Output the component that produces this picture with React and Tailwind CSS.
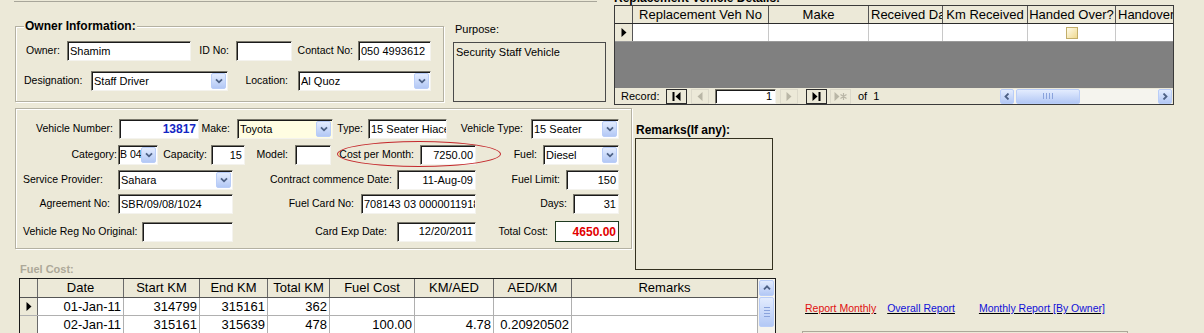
import React from 'react';

// Access XP style sunken control border
const sunken =
  'bg-white border border-t-[#7a786c] border-l-[#7a786c] border-r-[#f4f3ee] border-b-[#f4f3ee] shadow-[inset_1px_1px_0_#1a1a1a]';
const xpBtn = 'rounded-[2px] border border-[#b9cdf8] bg-linear-to-b from-[#e3ecfe] to-[#b3c8f5]';

function Chevron({ dir = 'down' }) {
  const d = {
    down: 'M1 1.3 L4 4.3 L7 1.3',
    up: 'M1 4.3 L4 1.3 L7 4.3',
    left: 'M4.5 0.5 L1.5 3.5 L4.5 6.5',
    right: 'M1.5 0.5 L4.5 3.5 L1.5 6.5',
  }[dir];
  const vertical = dir === 'down' || dir === 'up';
  return (
    <svg width={vertical ? 8 : 6} height={vertical ? 6 : 7} viewBox={vertical ? '0 0 8 6' : '0 0 6 7'}>
      <path d={d} fill="none" stroke="#4d6185" strokeWidth="1.8" />
    </svg>
  );
}

function DropBtn() {
  return (
    <span className={`ml-auto mr-[1px] flex h-[16px] w-[15px] shrink-0 items-center justify-center ${xpBtn}`}>
      <Chevron />
    </span>
  );
}

function Box({ w, children, right, className = '' }) {
  return (
    <div
      className={`${w} h-[20px] shrink-0 ${sunken} flex items-center overflow-hidden whitespace-nowrap px-[2px] text-[11px] ${
        right ? 'justify-end' : ''
      } ${className}`}
    >
      {children}
    </div>
  );
}

function Combo({ w, children, className = 'bg-white', text = 'text-[11px] pl-[2px]' }) {
  return (
    <div
      className={`${w} h-[20px] shrink-0 border border-t-[#7a786c] border-l-[#7a786c] border-r-[#f4f3ee] border-b-[#f4f3ee] shadow-[inset_1px_1px_0_#1a1a1a] ${className} flex items-center ${text}`}
    >
      <span className="flex-1 overflow-hidden whitespace-nowrap">{children}</span>
      <DropBtn />
    </div>
  );
}

function Label({ w, children, className = 'text-right' }) {
  return <span className={`${w} shrink-0 whitespace-nowrap text-[10.5px] ${className}`}>{children}</span>;
}

function Tri({ dir = 'right', fill = '#000' }) {
  return (
    <svg width="6" height="9" viewBox="0 0 6 9">
      <path d={dir === 'right' ? 'M0.5 0 L5.5 4.5 L0.5 9Z' : 'M5.5 0 L0.5 4.5 L5.5 9Z'} fill={fill} />
    </svg>
  );
}

function OwnerFrame() {
  return (
    <div className="relative ml-[15px] h-[76px] w-[429px] shrink-0 border border-[#b4b1a2] shadow-[inset_1px_1px_0_#fff,1px_1px_0_#fff]">
      <span className="absolute left-[8px] -top-[7px] bg-[#ece9d8] px-[1px] text-[12px] font-bold leading-[13px]">
        Owner Information:
      </span>
      <div className="mt-[14px] flex items-center">
        <Label w="w-[51px]" className="pl-[10px] text-left">Owner:</Label>
        <Box w="w-[124px]">Shamim</Box>
        <Label w="w-[45px]" className="pr-[7px] text-right">ID No:</Label>
        <Box w="w-[56px]" />
        <Label w="w-[66px]" className="pr-[5px] text-right">Contact No:</Label>
        <Box w="w-[73px]">050 4993612</Box>
      </div>
      <div className="mt-[10px] flex items-center">
        <Label w="w-[75px]" className="pl-[8px] text-left">Designation:</Label>
        <Combo w="w-[137px]">Staff Driver</Combo>
        <Label w="w-[70px]" className="pr-[10px] text-right">Location:</Label>
        <Combo w="w-[133px]">Al Quoz</Combo>
      </div>
    </div>
  );
}

function NavBtn({ w = 'w-[18px]', on, children, className = '' }) {
  return (
    <span
      className={`${w} flex h-[15px] shrink-0 items-center justify-center border ${
        on ? 'border-[#2b2b2b]' : 'border-[#dcd9ca]'
      } ${className}`}
    >
      {children}
    </span>
  );
}

function ReplacementGrid() {
  const cols = [
    ['w-[136px]', 'Replacement Veh No', 'justify-center'],
    ['w-[100px]', 'Make', 'justify-center'],
    ['w-[74px]', 'Received Da', 'justify-start pl-[2px]'],
    ['w-[85px]', 'Km Received', 'justify-center'],
    ['w-[88px]', 'Handed Over?', 'justify-center'],
    ['w-[60px]', 'Handover', 'justify-start pl-[2px]'],
  ];
  return (
    <div className="ml-[8px] w-[560px] shrink-0">
      <div className="-mt-[8px] h-[13px] whitespace-nowrap text-[12px] font-bold leading-[13px]">
        Replacement Vehicle Details:
      </div>
      <div className="flex flex-col overflow-hidden border border-[#3a3a3a] text-[13px]">
        <div className="flex h-[18px] border-b border-[#2b2b2b] bg-[#ece9d8]">
          <span className="w-[18px] shrink-0 border-r border-[#555]" />
          {cols.map(([w, t, a]) => (
            <span key={t} className={`${w} flex shrink-0 items-center overflow-hidden whitespace-nowrap border-r border-[#555] ${a}`}>
              {t}
            </span>
          ))}
        </div>
        <div className="flex h-[18px] border-b border-[#9a9a9a] bg-white">
          <span className="flex w-[18px] shrink-0 items-center justify-center border-r border-[#555] bg-[#ece9d8]">
            <Tri />
          </span>
          {cols.map(([w, t], i) => (
            <span key={t} className={`${w} flex shrink-0 items-center justify-center border-r border-[#c8c8c8]`}>
              {i === 4 && (
                <span className="h-[12px] w-[12px] border border-[#c2ae6a] bg-linear-to-br from-[#fffbe8] to-[#efd98f]" />
              )}
            </span>
          ))}
        </div>
        <div className="h-[46px] bg-[#808080]" />
        <div className="flex h-[16px] items-center bg-[#ece9d8] text-[11px]">
          <span className="w-[51px] shrink-0 pl-[6px]">Record:</span>
          <NavBtn w="w-[21px]" on>
            <svg width="9" height="9" viewBox="0 0 9 9">
              <rect x="0.5" y="0" width="2" height="9" />
              <path d="M8.5 0 L3.5 4.5 L8.5 9Z" />
            </svg>
          </NavBtn>
          <NavBtn className="ml-[4px]">
            <Tri dir="left" fill="#b9b6a6" />
          </NavBtn>
          <span className={`ml-[6px] flex h-[15px] w-[61px] items-center justify-end pr-[3px] ${sunken}`}>1</span>
          <NavBtn className="ml-[4px]">
            <Tri fill="#b9b6a6" />
          </NavBtn>
          <NavBtn w="w-[21px]" on className="ml-[8px]">
            <svg width="9" height="9" viewBox="0 0 9 9">
              <path d="M0.5 0 L5.5 4.5 L0.5 9Z" />
              <rect x="6.5" y="0" width="2" height="9" />
            </svg>
          </NavBtn>
          <NavBtn w="w-[21px]" className="ml-[3px]">
            <svg width="13" height="9" viewBox="0 0 13 9">
              <path d="M0.5 0 L5.5 4.5 L0.5 9Z" fill="#b9b6a6" />
              <path d="M9.5 1 V8 M6.5 2.5 L12.5 6.5 M12.5 2.5 L6.5 6.5" stroke="#b9b6a6" strokeWidth="1.2" />
            </svg>
          </NavBtn>
          <span className="ml-[7px]">of&nbsp;&nbsp;1</span>
          <div className="ml-auto mr-[1px] flex h-[15px] w-[172px] bg-[#f5f4ee]">
            <span className={`flex w-[14px] items-center justify-center ${xpBtn}`}>
              <Chevron dir="left" />
            </span>
            <span className={`ml-[2px] flex w-[64px] items-center justify-center gap-[2px] ${xpBtn}`}>
              <span className="h-[6px] w-px bg-[#8aa3dc]" />
              <span className="h-[6px] w-px bg-[#8aa3dc]" />
              <span className="h-[6px] w-px bg-[#8aa3dc]" />
              <span className="h-[6px] w-px bg-[#8aa3dc]" />
            </span>
            <span className="flex-1" />
            <span className={`flex w-[14px] items-center justify-center ${xpBtn}`}>
              <Chevron dir="right" />
            </span>
          </div>
        </div>
      </div>
    </div>
  );
}

function VehicleFrame() {
  return (
    <div className="relative ml-[15px] h-[141px] w-[617px] shrink-0 border border-[#b4b1a2] shadow-[inset_1px_1px_0_#fff,1px_1px_0_#fff]">
      <div className="mt-[10px] flex items-center">
        <Label w="w-[103px]" className="pr-[6px] text-right">Vehicle Number:</Label>
        <Box w="w-[80px]" right className="text-[12px] font-bold text-[#1326c4]">13817</Box>
        <Label w="w-[38px]" className="pr-[7px] text-right">Make:</Label>
        <Combo w="w-[96px]" className="bg-[#fffde2]">Toyota</Combo>
        <Label w="w-[35px]" className="pr-[5px] text-right">Type:</Label>
        <Box w="w-[79px]">15 Seater Hiace</Box>
        <Label w="w-[84px]" className="pr-[8px] text-right">Vehicle Type:</Label>
        <Combo w="w-[88px]">15 Seater</Combo>
      </div>
      <div className="mt-[6px] flex items-center">
        <Label w="w-[102px]" className="pr-[1px] text-right">Category:</Label>
        <Combo w="w-[40px]" text="text-[10.5px] pl-px">B 04</Combo>
        <Label w="w-[53px]" className="pr-[4px] text-right">Capacity:</Label>
        <Box w="w-[34px]" right>15</Box>
        <Label w="w-[50px]" className="pr-[7px] text-right">Model:</Label>
        <Box w="w-[36px]" />
        <Label w="w-[89px]" className="pr-[6px] text-right">Cost per Month:</Label>
        <Box w="w-[56px]" right>7250.00</Box>
        <Label w="w-[67px]" className="pr-[6px] text-right">Fuel:</Label>
        <Combo w="w-[76px]">Diesel</Combo>
      </div>
      <div className="mt-[5px] flex items-center">
        <Label w="w-[102px]" className="pl-[7px] text-left">Service Provider:</Label>
        <Combo w="w-[115px]">Sahara</Combo>
        <Label w="w-[164px]" className="pr-[5px] text-right">Contract commence Date:</Label>
        <Box w="w-[79px]" right>11-Aug-09</Box>
        <Label w="w-[90px]" className="pr-[6px] text-right">Fuel Limit:</Label>
        <Box w="w-[53px]" right>150</Box>
      </div>
      <div className="mt-[4px] flex items-center">
        <Label w="w-[102px]" className="pr-[8px] text-right">Agreement No:</Label>
        <Box w="w-[115px]">SBR/09/08/1024</Box>
        <Label w="w-[128px]" className="pr-[7px] text-right">Fuel Card No:</Label>
        <Box w="w-[115px]">708143 03 0000011918</Box>
        <Label w="w-[97px]" className="pr-[6px] text-right">Days:</Label>
        <Box w="w-[46px]" right>31</Box>
      </div>
      <div className="mt-[7px] flex items-center">
        <Label w="w-[126px]" className="pl-[7px] text-left">Vehicle Reg No Original:</Label>
        <Box w="w-[91px]" />
        <Label w="w-[164px]" className="pr-[10px] text-right">Card Exp Date:</Label>
        <Box w="w-[79px]" right>12/20/2011</Box>
        <Label w="w-[79px]" className="pr-[7px] text-right">Total Cost:</Label>
        <div className="flex h-[21px] w-[64px] shrink-0 items-center justify-end border border-[#1f3a20] bg-white pr-[2px] text-[12px] font-bold text-[#e20000]">
          4650.00
        </div>
      </div>
      {/* red annotation ring */}
      <span className="pointer-events-none absolute left-[321px] top-[32px] h-[26px] w-[164px] rounded-[50%] border border-[#c4282c]" />
    </div>
  );
}

const fuelCols = [
  ['w-[86px]', 'Date'],
  ['w-[76px]', 'Start KM'],
  ['w-[68px]', 'End KM'],
  ['w-[62px]', 'Total KM'],
  ['w-[85px]', 'Fuel Cost'],
  ['w-[79px]', 'KM/AED'],
  ['w-[78px]', 'AED/KM'],
  ['w-[186px]', 'Remarks'],
];

const fuelRows = [
  ['01-Jan-11', '314799', '315161', '362', '', '', '', ''],
  ['02-Jan-11', '315161', '315639', '478', '100.00', '4.78', '0.20920502', ''],
];

function FuelGrid() {
  return (
    <div className="ml-[19px] mt-[2px] flex h-[60px] w-[757px] border border-[#1a1a1a] text-[13px]">
      <div className="flex-1">
        <div className="flex h-[19px] border-b border-[#555] bg-[#ece9d8]">
          <span className="w-[18px] shrink-0 border-r border-[#6a6a6a]" />
          {fuelCols.map(([w, t]) => (
            <span key={t} className={`${w} flex shrink-0 items-center justify-center border-r border-[#6a6a6a]`}>
              {t}
            </span>
          ))}
        </div>
        {fuelRows.map((r, ri) => (
          <div key={ri} className="flex h-[18px] border-b border-[#b0b0b0] bg-white">
            <span className="flex w-[18px] shrink-0 items-center justify-center border-r border-[#6a6a6a] bg-[#ece9d8]">
              {ri === 0 && <Tri />}
            </span>
            {fuelCols.map(([w], ci) => (
              <span key={ci} className={`${w} flex shrink-0 items-center justify-end border-r border-[#b0b0b0] pr-[2px]`}>
                {r[ci]}
              </span>
            ))}
          </div>
        ))}
      </div>
      <div className="flex w-[17px] shrink-0 flex-col gap-[1px] bg-[#f5f4ee] p-[1px]">
        <span className={`flex h-[16px] items-center justify-center ${xpBtn}`}>
          <Chevron dir="up" />
        </span>
        <span className={`flex h-[30px] flex-col items-center justify-center gap-[2px] ${xpBtn}`}>
          <span className="h-px w-[6px] bg-[#8aa3dc]" />
          <span className="h-px w-[6px] bg-[#8aa3dc]" />
          <span className="h-px w-[6px] bg-[#8aa3dc]" />
          <span className="h-px w-[6px] bg-[#8aa3dc]" />
        </span>
      </div>
    </div>
  );
}

export default function App() {
  return (
    <div className="h-[333px] w-[1204px] overflow-hidden bg-[#ece9d8] font-['Liberation_Sans',Arial,sans-serif] text-black">
      <div className="flex h-[108px]">
        <div className="w-[606px] shrink-0">
          <div className="ml-[14px] mt-px h-px w-[583px] bg-[#a8a69a]" />
          <div className="mt-[24px] flex items-start">
            <OwnerFrame />
            <div className="-mt-[3px] ml-[9px] w-[154px]">
              <div className="pl-[2px] text-[11px] leading-[13px]">Purpose:</div>
              <div className="mt-[6px] h-[60px] border border-[#4a4a4a] pl-[2px] pt-[1px] text-[11px]">
                Security Staff Vehicle
              </div>
            </div>
          </div>
        </div>
        <ReplacementGrid />
      </div>

      <div className="flex">
        <div className="w-[776px] shrink-0">
          <div className="flex items-start">
            <VehicleFrame />
            <div className="ml-[3px] mt-[16px] w-[138px]">
              <div className="whitespace-nowrap pl-[1px] text-[12px] font-bold leading-[13px]">Remarks(If any):</div>
              <div className="mt-[1px] h-[132px] border border-[#33301f]" />
            </div>
          </div>
          <div className="-mt-[7px] ml-[20px] text-[11px] font-bold leading-[13px] text-[#aca899]">Fuel Cost:</div>
          <FuelGrid />
        </div>
        <div className="ml-[26px] mt-[194px]">
          <div className="flex pl-[3px] text-[10.5px] leading-[13px] underline">
            <span className="text-[#e01010]">Report Monthly</span>
            <span className="ml-[11px] text-[#1010d8]">Overall Report</span>
            <span className="ml-[24px] text-[#1010d8]">Monthly Report [By Owner]</span>
          </div>
          <div className="mt-[16px] h-[10px] w-[326px] border-x border-t border-[#aca899]" />
        </div>
      </div>
    </div>
  );
}
